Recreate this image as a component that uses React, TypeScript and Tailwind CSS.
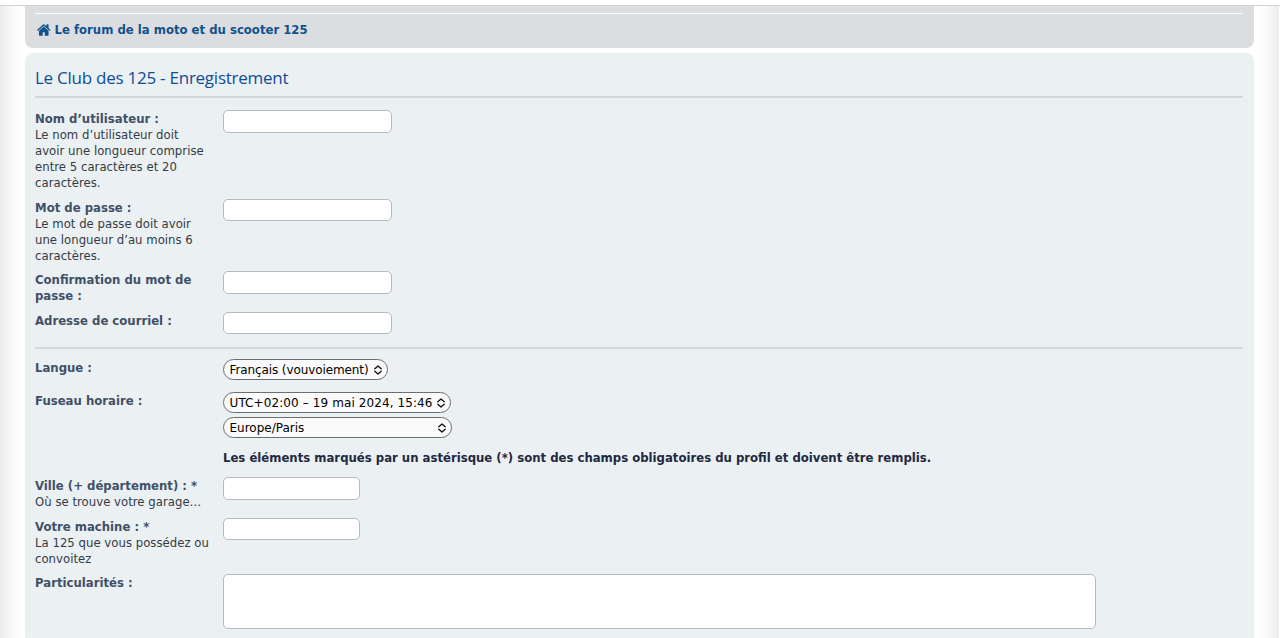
import clsx from "clsx"
import type { ReactNode } from "react"

function HomeIcon() {
  return (
    <svg viewBox="20 236 1624 1284" preserveAspectRatio="none" className="w-[13.5px] h-[11.5px] shrink-0" fill="currentColor">
      <path d="M1408 992v480q0 26-19 45t-45 19h-384v-384h-256v384h-384q-26 0-45-19t-19-45v-480q0-1 .5-3t.5-3l575-474 575 474q1 2 1 6zm223-69l-62 74q-8 9-21 11h-3q-13 0-21-7l-692-577-692 577q-12 8-24 7-13-2-21-11l-62-74q-8-10-7-23.5t11-21.5l719-599q32-26 76-26t76 26l244 204v-195q0-14 9-23t23-9h192q14 0 23 9t9 23v408l219 182q10 8 11 21.5t-7 23.5z" />
    </svg>
  )
}

function Arrows() {
  return (
    <svg viewBox="0 0 8 10" className="w-2 h-2.5 shrink-0" fill="none" stroke="#111" strokeWidth="1.3" strokeLinecap="round" strokeLinejoin="round">
      <path d="M.8 3.8 4 .9l3.2 2.9M.8 6.2 4 9.1l3.2-2.9" />
    </svg>
  )
}

function SelectBox({ value, className }: { value: string; className: string }) {
  return (
    <button
      type="button"
      className={clsx(
        "flex items-center justify-between h-[21px] rounded-full border border-[#6c6e70] bg-[#fafafa] pt-px pl-[5.5px] pr-[5px] text-[12px] text-black whitespace-nowrap",
        className
      )}
    >
      <span>{value}</span>
      <Arrows />
    </button>
  )
}

function TextInput({ className }: { className: string }) {
  return <input type="text" className={clsx("block h-[22.4px] rounded-[5px] border border-[#b4bac0] bg-white", className)} />
}

type RowProps = {
  label: string
  hint?: string[]
  className: string
  children: ReactNode
}

function Row({ label, hint = [], className, children }: RowProps) {
  return (
    <div className={clsx("flex items-start", className)}>
      <div className="w-[188px] shrink-0 pt-[0.8px] whitespace-pre-line">
        <label className="block font-bold text-[#425067]">{label}</label>
        {hint.map((line) => (
          <span key={line} className="block whitespace-nowrap tracking-[0.02px] text-[#333c46]">
            {line}
          </span>
        ))}
      </div>
      {children}
    </div>
  )
}

export default function App() {
  return (
    <div className="flex flex-col h-[638px] overflow-hidden bg-white text-[11.69px] leading-4 font-['Verdana','DejaVu_Sans',sans-serif]">
      <div className="h-[6px] shrink-0 border-b border-[#d3d3d5] bg-white" />

      <div className="flex flex-1 min-h-0">
        <div className="w-[25px] shrink-0 bg-linear-to-r from-[#ebebeb] via-[#fafafa] via-50% to-white" />

        <main className="w-[1229px] shrink-0">
          {/* Breadcrumb */}
          <nav className="h-[42px] rounded-b-[8px] bg-[#dcdde1] pl-[10px] pr-[11px] pt-[7px]">
            <div className="h-px bg-white" />
            <a href="#" className="flex items-center gap-[4px] pl-[2px] pt-2 font-bold text-[#105289]">
              <HomeIcon />
              <span className="whitespace-nowrap">Le forum de la moto et du scooter 125</span>
            </a>
          </nav>

          {/* Registration form */}
          <form className="mt-[5px] h-[585px] rounded-t-[8px] bg-[#ebf0f3] pl-[10px] pr-[11px] pt-[14px]">
            <h2 className="h-[29px] text-[17px] leading-[22px] tracking-[-0.25px] whitespace-nowrap text-[#0f4d98] font-['Trebuchet_MS','Open_Sans',sans-serif]">
              Le Club des 125 - Enregistrement
            </h2>
            <div className="h-[2px] bg-[#d2d7dc]" />

            <Row label="Nom d’utilisateur :" hint={["Le nom d’utilisateur doit", "avoir une longueur comprise", "entre 5 caractères et 20", "caractères."]} className="h-[88.6px] mt-[12.4px]">
              <TextInput className="w-[169px]" />
            </Row>
            <Row label="Mot de passe :" hint={["Le mot de passe doit avoir", "une longueur d’au moins 6", "caractères."]} className="h-[72.4px]">
              <TextInput className="w-[169px]" />
            </Row>
            <Row label={"Confirmation du mot de\npasse :"} className="h-[40.7px]">
              <TextInput className="w-[169px]" />
            </Row>
            <Row label="Adresse de courriel :" className="h-[34.9px]">
              <TextInput className="w-[169px]" />
            </Row>

            <div className="h-[2px] bg-[#d2d7dc]" />

            <Row label="Langue :" className="h-[33px] mt-[10px]">
              <SelectBox value="Français (vouvoiement)" className="w-[165px] tracking-[-0.1px]" />
            </Row>
            <Row label="Fuseau horaire :" className="h-[58px]">
              <div className="flex flex-col gap-[4px]">
                <SelectBox value="UTC+02:00 – 19 mai 2024, 15:46" className="w-[228px] tracking-[0.1px]" />
                <SelectBox value="Europe/Paris" className="w-[229px]" />
              </div>
            </Row>
            <p className="ml-[188px] h-[27.4px] pt-[0.5px] font-bold whitespace-nowrap text-[#1f2940]">
              Les éléments marqués par un astérisque (*) sont des champs obligatoires du profil et doivent être remplis.
            </p>

            <Row label="Ville (+ département) : *" hint={["Où se trouve votre garage…"]} className="h-[40.7px]">
              <TextInput className="w-[137px]" />
            </Row>
            <Row label="Votre machine : *" hint={["La 125 que vous possédez ou", "convoitez"]} className="h-[56.3px]">
              <TextInput className="w-[137px]" />
            </Row>
            <Row label="Particularités :" className="h-[60px]">
              <textarea className="block w-[873px] h-[54.5px] resize-none rounded-[5px] border border-[#b4bac0] bg-white" />
            </Row>
          </form>
        </main>

        <div className="w-[25px] shrink-0 bg-linear-to-l from-[#ebebeb] via-[#fafafa] via-50% to-white" />
        <div className="flex-1 bg-white" />
      </div>
    </div>
  )
}
